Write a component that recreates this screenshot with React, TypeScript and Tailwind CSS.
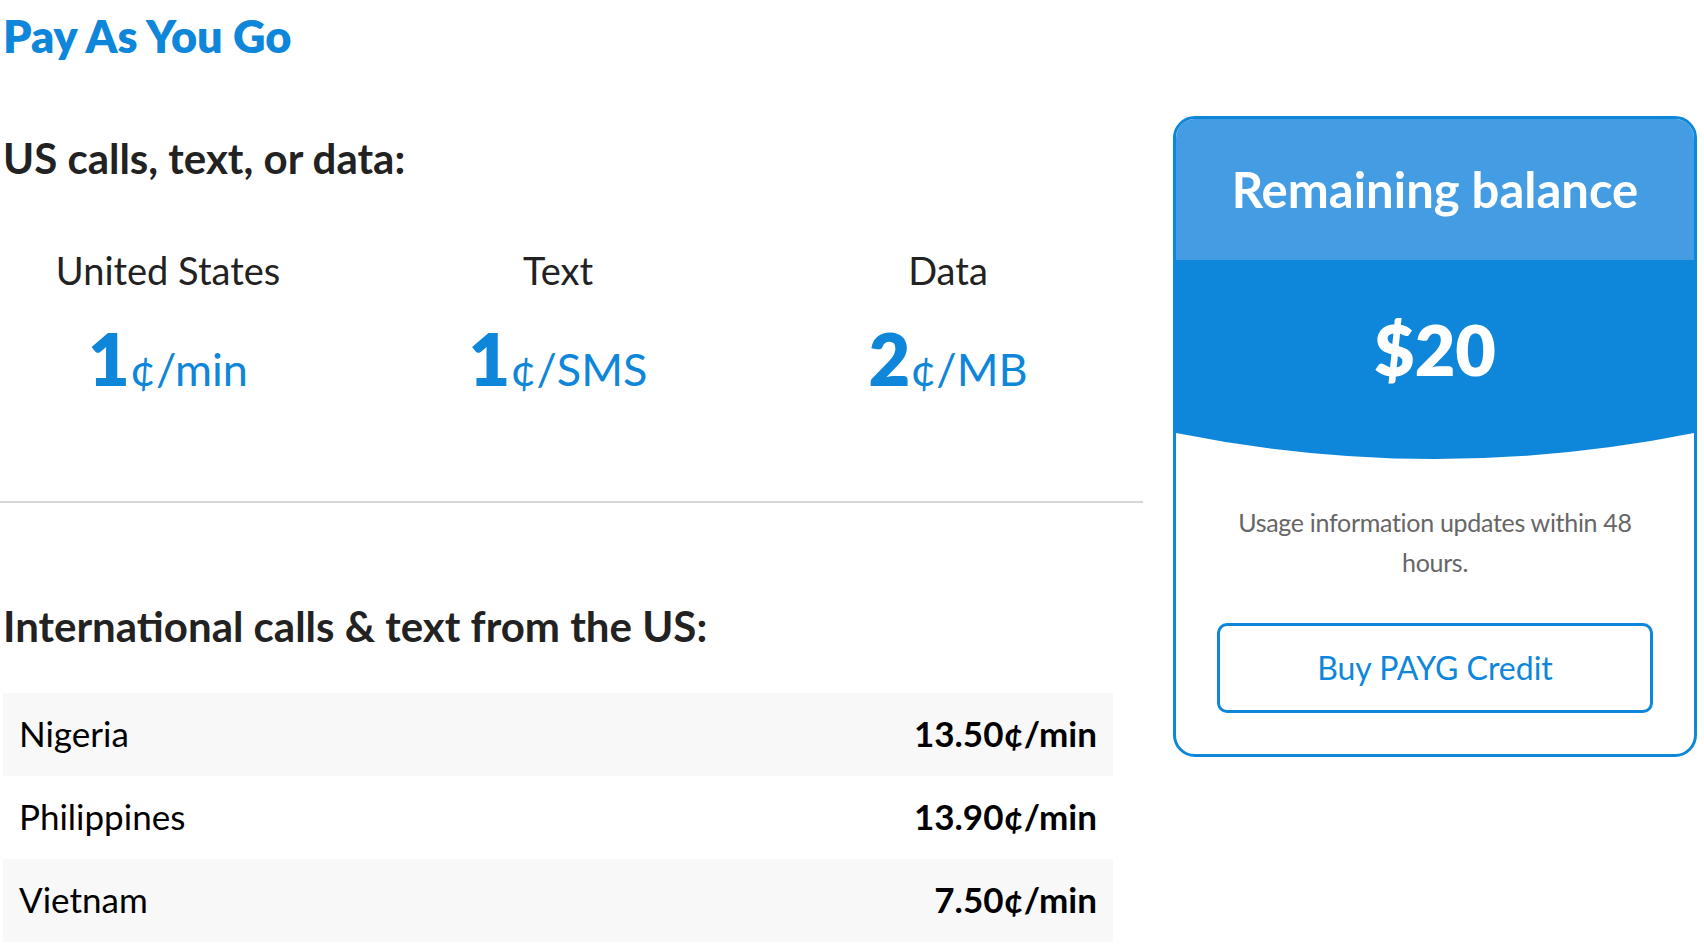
export default function App() {
  const cols = [
    { label: "United States", big: "1", unit: "¢/min" },
    { label: "Text", big: "1", unit: "¢/SMS" },
    { label: "Data", big: "2", unit: "¢/MB" },
  ];
  const rows = [
    { country: "Nigeria", rate: "13.50¢/min" },
    { country: "Philippines", rate: "13.90¢/min" },
    { country: "Vietnam", rate: "7.50¢/min" },
  ];
  return (
    <div className="w-[1704px] h-[946px] bg-white overflow-hidden flex items-start font-['Lato',sans-serif] text-[#222]">
      <div className="w-[1143px] shrink-0 flex flex-col">
        <h1 className="mt-[14px] ml-[3px] text-[45px] leading-none font-extrabold text-[#0e86d9]">Pay As You Go</h1>
        <h2 className="mt-[78px] ml-[3px] text-[42px] leading-none font-bold">US calls, text, or data:</h2>
        <div className="mt-[72px] flex gap-[54px]">
          {cols.map((c) => (
            <div key={c.label} className="w-[336px] flex flex-col items-center">
              <div className="text-[38px] leading-none">{c.label}</div>
              <div className="mt-[33px] flex items-baseline leading-none text-[#0e86d9]">
                <span className="text-[72px] font-extrabold leading-none">{c.big}</span>
                <span className="text-[45px] leading-none">{c.unit}</span>
              </div>
            </div>
          ))}
        </div>
        <div className="mt-[107px] h-[2px] bg-[#d6d6d6]" />
        <h2 className="mt-[102px] ml-[3px] text-[42px] leading-none font-bold">
          International calls &amp; text from the US:
        </h2>
        <div className="mt-[46px] ml-[3px] w-[1110px] flex flex-col">
          {rows.map((r, i) => (
            <div
              key={r.country}
              className={
                "h-[83px] pb-[3px] pl-[16px] pr-[16px] flex items-center justify-between text-[35px] leading-none text-black " +
                (i % 2 === 0 ? "bg-[#f8f8f8]" : "bg-white")
              }
            >
              <span>{r.country}</span>
              <span className="font-bold">{r.rate}</span>
            </div>
          ))}
        </div>
      </div>

      <div className="ml-[30px] mt-[116px] w-[524px] h-[641px] shrink-0 border-[3px] border-[#0e86d9] rounded-[22px] overflow-hidden flex flex-col">
        <div className="h-[141px] shrink-0 bg-[#449ce3] pt-[46px] text-center text-white text-[49px] font-bold leading-none">
          Remaining balance
        </div>
        <div className="h-[173px] shrink-0 bg-[#0e86d9] pt-[54px] text-center text-white text-[70px] font-extrabold leading-none">
          $20
        </div>
        <svg className="block w-full h-[26px] shrink-0" viewBox="0 0 518 26" preserveAspectRatio="none">
          <path d="M0 0H518Q259 52 0 0Z" fill="#0e86d9" />
        </svg>
        <p className="mt-[43px] mx-auto w-[420px] text-center text-[25px] leading-[40px] text-[#666] tracking-[-0.3px]">
          Usage information updates within 48 hours.
        </p>
        <button className="mt-[41px] mx-[41px] h-[90px] shrink-0 border-[3px] border-[#0e86d9] rounded-[10px] text-[#0e86d9] text-[32px] leading-none">
          Buy PAYG Credit
        </button>
      </div>
    </div>
  );
}
